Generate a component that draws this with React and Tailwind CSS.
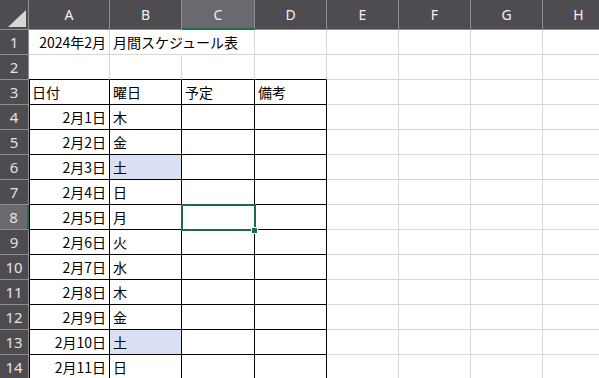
import React from 'react';

const cols = ['A', 'B', 'C', 'D', 'E', 'F', 'G', 'H'];
const days = ['木', '金', '土', '日', '月', '火', '水', '木', '金', '土', '日'];

const cellFont = { fontFamily: '"Noto Sans CJK JP", "Noto Sans", sans-serif' };

const Corner = () => (
  <div className="relative h-[30px] bg-[#4e4c50] border-r border-b border-[#8e8d90]">
    <svg className="absolute left-[8px] top-[10px]" width="18" height="17" viewBox="0 0 18 17">
      <polygon points="18,0 18,17 0,17" fill="#d6d6d6" />
    </svg>
  </div>
);

const ColHeader = ({ label, active }) => (
  <div
    className={`h-[30px] flex items-center justify-center text-[14px] text-[#f1f1f1] border-r border-[#8e8d90] ${
      active ? 'bg-[#6b696d] border-b-2 border-b-[#1e7145]' : 'bg-[#4e4c50] border-b border-b-[#8e8d90]'
    }`}
    style={{ fontFamily: '"Noto Sans", "Liberation Sans", sans-serif' }}
  >
    {label}
  </div>
);

const RowHeader = ({ n, active }) => (
  <div
    className={`h-[25px] flex items-center justify-center text-[15px] text-[#e2e2e2] border-b border-[#8e8d90] ${
      active ? 'bg-[#6b696d] border-r-2 border-r-[#1e7145]' : 'bg-[#4e4c50] border-r border-r-[#8e8d90]'
    }`}
    style={{ fontFamily: '"Noto Sans", "Liberation Sans", sans-serif' }}
  >
    {n}
  </div>
);

const Cell = ({ children, right, boxed, leftEdge, topEdge, fill, span, selected }) => (
  <div
    className={`relative h-[25px] flex items-center text-[14px] text-black whitespace-nowrap border-b border-r ${
      boxed ? 'border-black' : 'border-[#d6d6d6]'
    } ${topEdge ? 'border-b-black' : ''} ${right ? 'justify-end pr-[3px]' : 'pl-[3px]'} ${
      fill ? 'bg-[#d9e0f3]' : 'bg-white'
    } ${leftEdge ? 'shadow-[inset_1px_0_0_#000]' : ''} ${span ? 'col-span-2' : ''} ${selected ? 'z-10' : ''}`}
    style={cellFont}
  >
    {children}
    {selected && (
      <>
        <div className="absolute left-[-1px] top-[-1px] w-[75px] h-[27px] border-[2px] border-solid border-[#1e6b47]" />
        <div className="absolute left-[70px] top-[23px] w-[5px] h-[5px] bg-[#1e6b47] ring-1 ring-white" />
      </>
    )}
  </div>
);

export default function App() {
  const rows = [];

  rows.push(
    <React.Fragment key="r1">
      <RowHeader n={1} />
      <Cell right>2024年2月</Cell>
      <Cell span>月間スケジュール表</Cell>
      <Cell />
      <Cell />
      <Cell />
      <Cell />
      <Cell />
    </React.Fragment>
  );

  rows.push(
    <React.Fragment key="r2">
      <RowHeader n={2} />
      <Cell topEdge />
      <Cell topEdge />
      <Cell topEdge />
      <Cell topEdge />
      <Cell />
      <Cell />
      <Cell />
      <Cell />
    </React.Fragment>
  );

  rows.push(
    <React.Fragment key="r3">
      <RowHeader n={3} />
      <Cell boxed leftEdge>日付</Cell>
      <Cell boxed>曜日</Cell>
      <Cell boxed>予定</Cell>
      <Cell boxed>備考</Cell>
      <Cell />
      <Cell />
      <Cell />
      <Cell />
    </React.Fragment>
  );

  days.forEach((d, i) => {
    const n = i + 4;
    rows.push(
      <React.Fragment key={`r${n}`}>
        <RowHeader n={n} active={n === 8} />
        <Cell boxed leftEdge right>{`2月${i + 1}日`}</Cell>
        <Cell boxed fill={d === '土'}>{d}</Cell>
        <Cell boxed selected={n === 8} />
        <Cell boxed />
        <Cell />
        <Cell />
        <Cell />
        <Cell />
      </React.Fragment>
    );
  });

  return (
    <div className="w-[599px] h-[378px] overflow-hidden bg-white">
      <div className="grid grid-cols-[29px_81px_72px_73px_72px_72px_72px_72px_72px]">
        <Corner />
        {cols.map((c) => (
          <ColHeader key={c} label={c} active={c === 'C'} />
        ))}
        {rows}
      </div>
    </div>
  );
}
